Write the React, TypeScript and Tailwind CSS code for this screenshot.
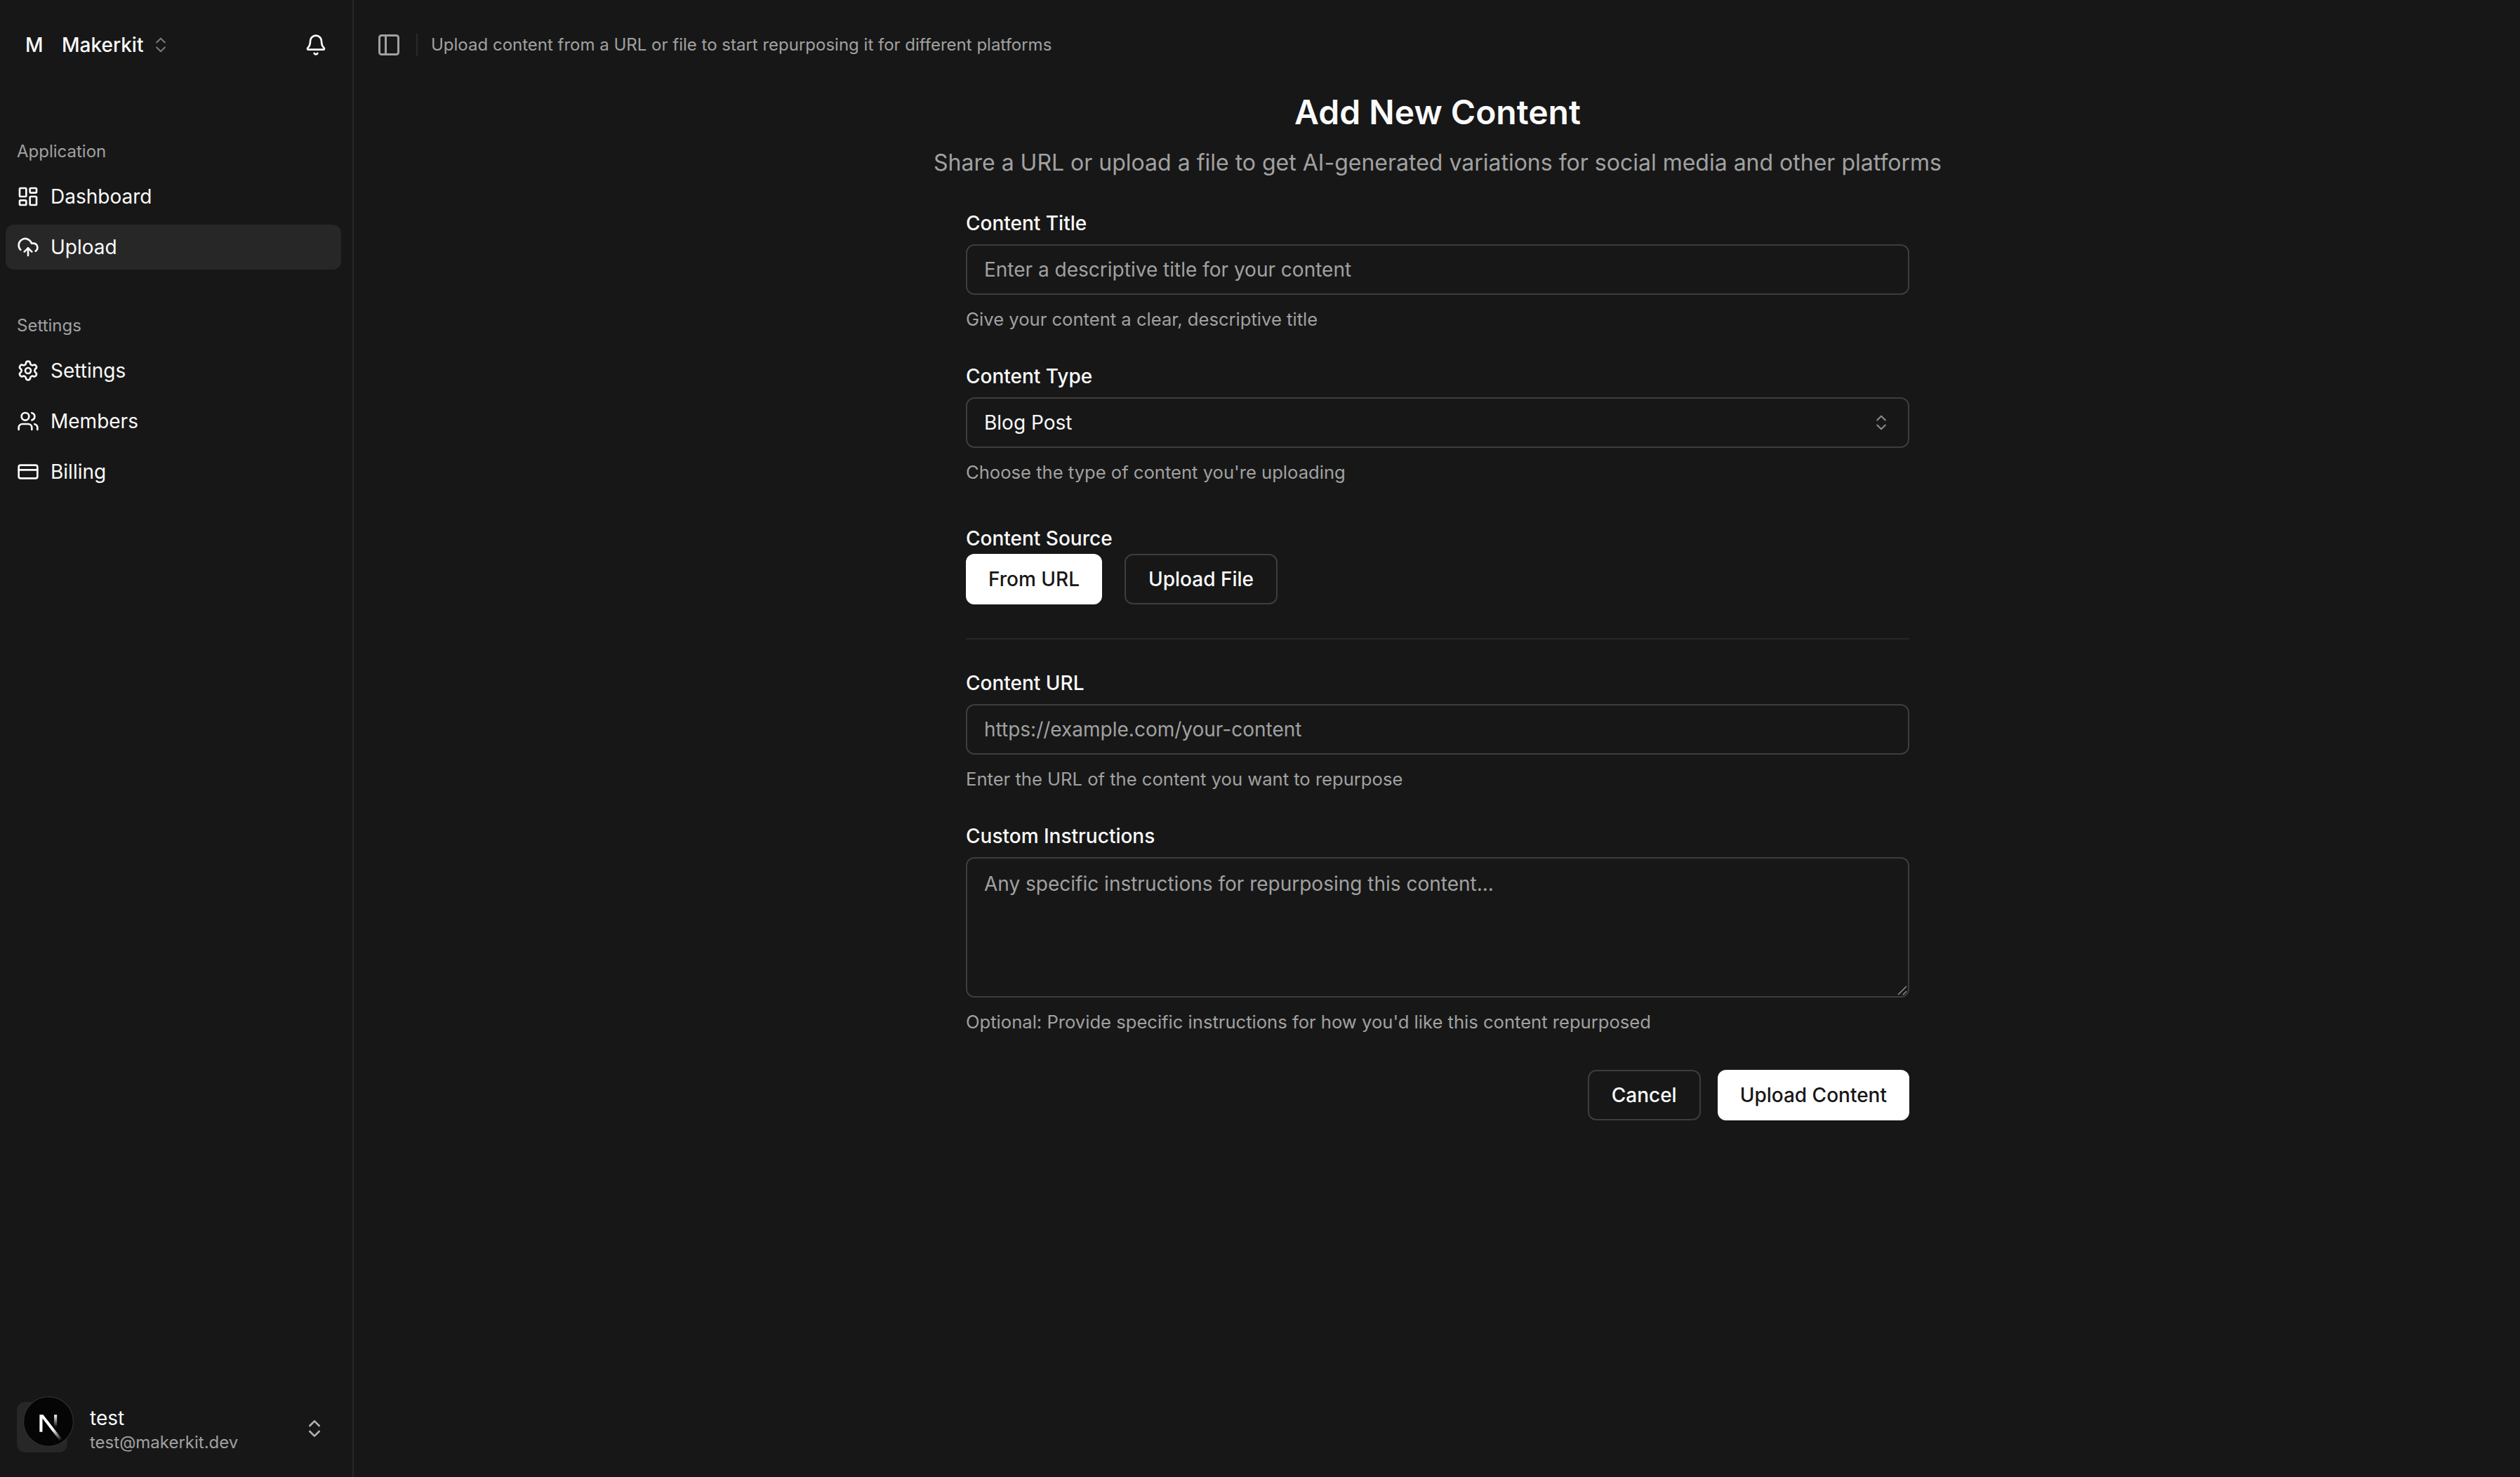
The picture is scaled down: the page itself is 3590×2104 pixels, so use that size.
import type { ReactNode } from 'react'
import {
  Bell,
  ChevronsUpDown,
  CloudUpload,
  CreditCard,
  LayoutDashboard,
  PanelLeft,
  Settings,
  Users,
} from 'lucide-react'

function NavItem({ icon, label, active }: { icon: ReactNode; label: string; active?: boolean }) {
  return (
    <div
      className={`flex h-16 items-center gap-4 rounded-xl px-4 text-[28px] text-[#fafafa] ${
        active ? 'bg-[#272727]' : ''
      }`}
    >
      {icon}
      <span>{label}</span>
    </div>
  )
}

function Label({ children }: { children: ReactNode }) {
  return <div className="text-[28px] leading-[28px] font-medium text-[#fafafa]">{children}</div>
}

function Help({ children }: { children: ReactNode }) {
  return <p className="mt-4 text-[25.6px] leading-[38px] text-[#a1a1a1]">{children}</p>
}

function TextField({ placeholder }: { placeholder: string }) {
  return (
    <input
      placeholder={placeholder}
      className="mt-4 block h-[72px] w-full rounded-xl border-2 border-[#3d3d3d] bg-transparent px-6 text-[28px] text-[#fafafa] outline-none placeholder:text-[#a1a1a1]"
    />
  )
}

function NextAvatar() {
  return (
    <svg viewBox="0 0 180 180" className="h-[72px] w-[72px]" fill="none">
      <defs>
        <linearGradient id="nextDiag" x1="109" y1="116.5" x2="144.5" y2="160.5" gradientUnits="userSpaceOnUse">
          <stop stopColor="white" />
          <stop offset="1" stopColor="white" stopOpacity="0" />
        </linearGradient>
        <linearGradient id="nextBar" x1="121" y1="54" x2="120.8" y2="106" gradientUnits="userSpaceOnUse">
          <stop stopColor="white" />
          <stop offset="1" stopColor="white" stopOpacity="0" />
        </linearGradient>
      </defs>
      <circle cx="90" cy="90" r="88.5" fill="#050505" stroke="#303030" strokeWidth="3" />
      <g transform="translate(12.5 20) scale(0.85)">
        <path
          d="M149.508 157.52L69.142 54H54V125.97H66.1136V69.3836L139.999 164.845C143.333 162.614 146.509 160.165 149.508 157.52Z"
          fill="url(#nextDiag)"
        />
        <rect x="115" y="54" width="12" height="72" fill="url(#nextBar)" />
      </g>
    </svg>
  )
}

export default function App() {
  return (
    <div className="flex h-[2104px] w-[3590px] overflow-hidden bg-[#171717] font-['Inter',sans-serif] text-[#fafafa]">
      <aside className="flex h-full w-[504px] shrink-0 flex-col border-r-2 border-[#262626]">
        <div className="flex h-[128px] shrink-0 items-center pr-[36px] pl-[36px]">
          <span className="w-[52px] text-[28px] font-medium">M</span>
          <span className="text-[28px] font-medium">Makerkit</span>
          <ChevronsUpDown size={28} strokeWidth={1.75} className="ml-[11px] text-[#7a7a7a]" />
          <Bell size={32} className="ml-auto text-[#fafafa]" />
        </div>

        <div className="mt-[72px] pr-4 pl-2">
          <div className="px-4 text-[24px] leading-[32px] text-[#a1a1a1]">Application</div>
          <div className="mt-4 flex flex-col gap-2">
            <NavItem icon={<LayoutDashboard size={32} />} label="Dashboard" />
            <NavItem icon={<CloudUpload size={32} />} label="Upload" active />
          </div>

          <div className="mt-[64px] px-4 text-[24px] leading-[32px] text-[#a1a1a1]">Settings</div>
          <div className="mt-4 flex flex-col gap-2">
            <NavItem icon={<Settings size={32} />} label="Settings" />
            <NavItem icon={<Users size={32} />} label="Members" />
            <NavItem icon={<CreditCard size={32} />} label="Billing" />
          </div>
        </div>

        <div className="mt-auto mb-[30px] flex items-start pr-[38px] pl-6">
          <div className="relative h-[72px] w-[72px] shrink-0 rounded-xl bg-[#272727]">
            <div className="absolute top-[-8px] left-[9px]">
              <NextAvatar />
            </div>
          </div>
          <div className="mt-[7px] ml-8">
            <div className="text-[28px] leading-[32px]">test</div>
            <div className="text-[24px] leading-[38px] text-[#a1a1a1]">test@makerkit.dev</div>
          </div>
          <ChevronsUpDown size={32} className="mt-[22px] ml-auto text-[#b0b0b0]" />
        </div>
      </aside>

      <main className="min-w-0 flex-1 pl-0.5">
        <header className="flex h-[128px] items-center pl-[30px]">
          <PanelLeft size={36} className="text-[#a1a1a1]" />
          <div className="mr-[19px] ml-[21px] h-8 w-0.5 bg-[#2a2a2a]" />
          <span className="text-[24px] text-[#a1a1a1]">
            Upload content from a URL or file to start repurposing it for different platforms
          </span>
        </header>

        <div className="text-center">
          <h1 className="text-[48px] leading-[64px] font-semibold">Add New Content</h1>
          <p className="mt-[20px] text-[32px] leading-[40px] text-[#a1a1a1]">
            Share a URL or upload a file to get AI-generated variations for social media and other platforms
          </p>
        </div>

        <form className="mx-auto mt-[52px] w-[1344px]">
          <Label>Content Title</Label>
          <TextField placeholder="Enter a descriptive title for your content" />
          <Help>Give your content a clear, descriptive title</Help>

          <div className="mt-12">
            <Label>Content Type</Label>
            <div className="mt-4 flex h-[72px] items-center justify-between rounded-xl border-2 border-[#3d3d3d] pr-6 pl-6 text-[28px]">
              <span>Blog Post</span>
              <ChevronsUpDown size={28} strokeWidth={1.75} className="text-[#8a8a8a]" />
            </div>
            <Help>Choose the type of content you're uploading</Help>
          </div>

          <div className="mt-[61px]">
            <Label>Content Source</Label>
            <div className="mt-2 flex gap-8">
              <div className="flex h-[72px] items-center rounded-xl bg-white px-8 text-[28px] font-medium text-[#171717]">
                From URL
              </div>
              <div className="flex h-[72px] items-center rounded-xl border-2 border-[#3d3d3d] px-8 text-[28px] font-medium">
                Upload File
              </div>
            </div>
          </div>

          <div className="mt-12 h-0.5 bg-[#262626]" />

          <div className="mt-12">
            <Label>Content URL</Label>
            <TextField placeholder="https://example.com/your-content" />
            <Help>Enter the URL of the content you want to repurpose</Help>
          </div>

          <div className="mt-12">
            <Label>Custom Instructions</Label>
            <div className="relative mt-4">
              <textarea
                placeholder="Any specific instructions for repurposing this content..."
                className="block h-[200px] w-full resize-none rounded-xl border-2 border-[#3d3d3d] bg-transparent px-6 py-5 text-[28px] leading-[32px] outline-none placeholder:text-[#a1a1a1]"
              />
              <svg viewBox="0 0 14 14" className="absolute right-[3px] bottom-[3px] h-[14px] w-[14px]" fill="none">
                <path d="M1 13L13 1M8 13L13 8" stroke="#8a8a8a" strokeWidth="1.6" />
              </svg>
            </div>
            <Help>Optional: Provide specific instructions for how you'd like this content repurposed</Help>
          </div>

          <div className="mt-[49px] flex justify-end gap-6">
            <div className="flex h-[72px] items-center rounded-xl border-2 border-[#3d3d3d] px-8 text-[28px] font-medium">
              Cancel
            </div>
            <div className="flex h-[72px] items-center rounded-xl bg-white px-8 text-[28px] font-medium text-[#171717]">
              Upload Content
            </div>
          </div>
        </form>
      </main>
    </div>
  )
}
